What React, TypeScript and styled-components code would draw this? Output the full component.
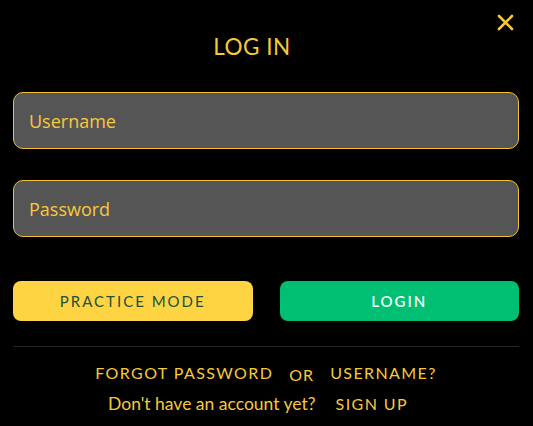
import styled, { createGlobalStyle } from 'styled-components'

const Global = createGlobalStyle`
  html, body {
    margin: 0;
    padding: 0;
    background: #000000;
  }
  * { box-sizing: border-box; }
`

function App () {
  return (
    <>
      <Global />
      <Modal>
        <Close aria-label="close">
          <svg width="17" height="17" viewBox="0 0 17 17">
            <path d="M2 2 L15 15 M15 2 L2 15" stroke="#f8c93a" strokeWidth="2.6" strokeLinecap="round" />
          </svg>
        </Close>
        <Title>LOG IN</Title>

        <Field placeholder="Username" />
        <Field placeholder="Password" type="password" />

        <Buttons>
          <Button $variant="practice">PRACTICE MODE</Button>
          <Button $variant="login">LOGIN</Button>
        </Buttons>

        <Divider />

        <Line>
          <TextLink>FORGOT PASSWORD</TextLink>
          <Or>OR</Or>
          <TextLink>USERNAME?</TextLink>
        </Line>
        <Line $tight>
          <Plain>Don't have an account yet?</Plain>
          <TextLink>SIGN UP</TextLink>
        </Line>
      </Modal>
    </>
  )
}

const Modal = styled.div`
  position: relative;
  width: 533px;
  height: 426px;
  padding: 34px 14px 0 13px;
  display: flex;
  flex-direction: column;
  font-family: Lato, "Open Sans", sans-serif;
  color: #f8c93a;
  background: #000000;
`

const Close = styled.button`
  position: absolute;
  top: 14px;
  right: 19px;
  padding: 0;
  border: none;
  background: none;
  display: flex;
  cursor: pointer;
`

const Title = styled.h1`
  margin: 0 0 32px;
  padding-right: 28px;
  text-align: center;
  font-weight: 400;
  font-size: 22.5px;
  line-height: 26px;
  letter-spacing: 0.5px;
  color: #f8c93a;
`

const Field = styled.input`
  width: 100%;
  height: 57px;
  margin-bottom: 31px;
  padding: 0 15px;
  background: #555555;
  border: 1px solid #f0c030;
  border-radius: 10px;
  font-family: "Open Sans", sans-serif;
  font-size: 18px;
  color: #f8c93a;
  outline: none;

  &::placeholder {
    color: #f8c93a;
  }
`

const Buttons = styled.div`
  display: grid;
  grid-template-columns: 1fr 1fr;
  gap: 27px;
  margin-top: 13px;
`

const Button = styled.button<{ $variant: 'practice' | 'login' }>`
  height: 40px;
  border: none;
  border-radius: 8px;
  font-family: Lato, sans-serif;
  font-size: 15px;
  letter-spacing: 2px;
  cursor: pointer;
  background: ${p => (p.$variant === 'practice' ? '#ffd442' : '#00bf72')};
  color: ${p => (p.$variant === 'practice' ? '#20503a' : '#f4fff8')};
  font-weight: ${p => (p.$variant === 'practice' ? 400 : 600)};
`

const Divider = styled.hr`
  margin: 25px 0 0;
  border: none;
  height: 1px;
  background: #262626;
`

const Line = styled.div<{ $tight?: boolean }>`
  display: flex;
  justify-content: center;
  align-items: baseline;
  gap: ${p => (p.$tight ? '20px' : '16px')};
  margin-top: ${p => (p.$tight ? '11px' : '16px')};
  padding-right: ${p => (p.$tight ? '16px' : '0')};
  font-size: 16px;
  line-height: 20px;
`

const TextLink = styled.a`
  letter-spacing: 1.4px;
  color: #f8c93a;
  cursor: pointer;
`

const Or = styled.span`
  position: relative;
  top: 2px;
  letter-spacing: 1px;
`

const Plain = styled.span`
  font-size: 17.5px;
`

export default App
